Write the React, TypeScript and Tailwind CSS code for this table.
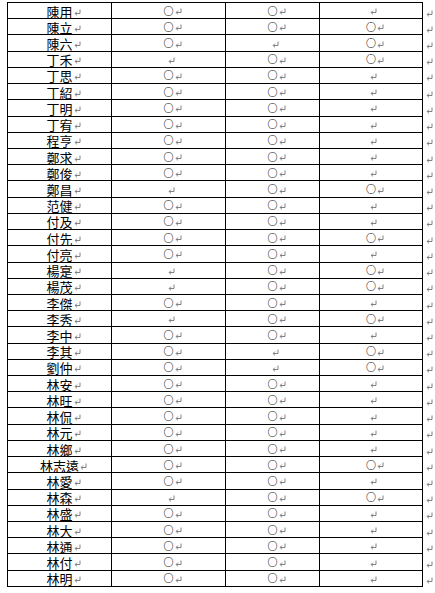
import React from 'react';

type Row = [string, boolean, boolean, boolean];

const rows: Row[] = [
  ['陳用', true, true, false],
  ['陳立', true, true, true],
  ['陳六', true, false, true],
  ['丁禾', false, true, true],
  ['丁思', true, true, false],
  ['丁紹', true, true, false],
  ['丁明', true, true, false],
  ['丁宥', true, true, false],
  ['程亨', true, true, false],
  ['鄭求', true, true, false],
  ['鄭俊', true, true, false],
  ['鄭昌', false, true, true],
  ['范健', true, true, false],
  ['付及', true, true, false],
  ['付先', true, true, true],
  ['付亮', true, true, false],
  ['楊寔', false, true, true],
  ['楊茂', false, true, true],
  ['李傑', true, true, false],
  ['李秀', false, true, true],
  ['李中', true, true, false],
  ['李其', true, false, true],
  ['劉仲', true, false, true],
  ['林安', true, true, false],
  ['林旺', true, true, false],
  ['林侃', true, true, false],
  ['林元', true, true, false],
  ['林鄉', true, true, false],
  ['林志遠', true, true, true],
  ['林愛', true, true, false],
  ['林森', false, true, true],
  ['林盛', true, true, false],
  ['林大', true, true, false],
  ['林通', true, true, false],
  ['林付', true, true, false],
  ['林明', true, true, false],
];

// Word paragraph mark
const Mark = ({ className = '' }: { className?: string }) => (
  <svg width="7" height="7" viewBox="0 0 7 7" className={`shrink-0 ${className}`} fill="none" stroke="#808080" strokeWidth="1">
    <path d="M6 0.5V4.5H1.2" />
    <path d="M3 2.6L1.1 4.5L3 6.4" />
  </svg>
);

const Cell = ({ text }: { text: string }) => (
  <div className="flex items-center justify-center border-r border-b border-black pt-[1px]">
    {text ? (
      <>
        <span className="leading-none">{text}</span>
        <Mark className="mt-[2px] -mr-[8px] ml-[1px]" />
      </>
    ) : (
      <Mark className="mt-[2px] ml-[4px]" />
    )}
  </div>
);

const Circle = ({ on }: { on: boolean }) => (
  <div className="flex items-center justify-center border-r border-b border-black">
    {on ? (
      <>
        <span className="text-[10px] leading-none text-black font-bold">○</span>
        <Mark className="mt-[2px] -mr-[8px] ml-[1px]" />
      </>
    ) : (
      <Mark className="mt-[2px] ml-[5px]" />
    )}
  </div>
);

export default function App() {
  return (
    <div
      className="w-[435px] h-[593px] bg-white pt-[2px] pl-[7px] flex"
      style={{ fontFamily: '"Noto Sans CJK TC", "DejaVu Sans", sans-serif' }}
    >
      <div className="grid grid-cols-[104px_114px_94px_103px] auto-rows-[16.22px] border-l border-t border-black self-start text-[13px] text-black">
        {rows.map(([name, a, b, c]) => (
          <React.Fragment key={name}>
            <Cell text={name} />
            <Circle on={a} />
            <Circle on={b} />
            <Circle on={c} />
          </React.Fragment>
        ))}
      </div>
      <div className="flex flex-col pt-[1px] ml-[3px]">
        {rows.map(([name]) => (
          <div key={name} className="h-[16.22px] flex items-center pt-[4px]">
            <Mark />
          </div>
        ))}
      </div>
    </div>
  );
}
